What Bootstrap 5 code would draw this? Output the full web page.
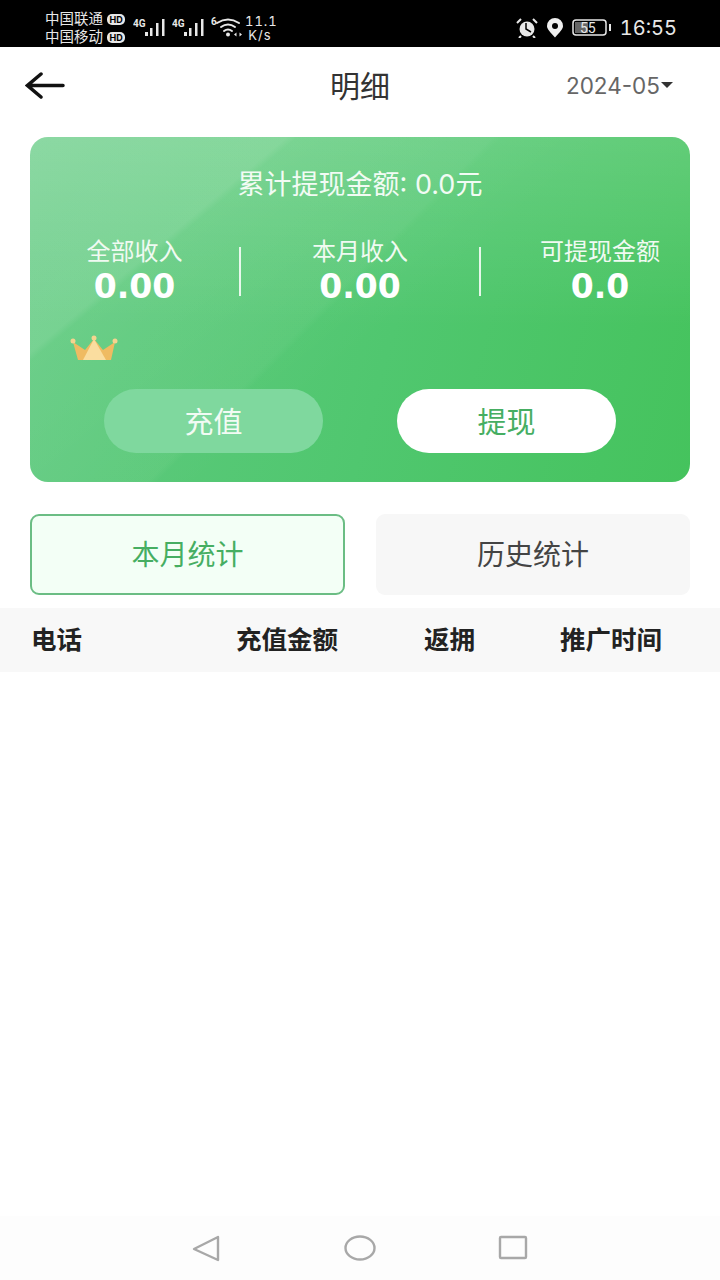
<!DOCTYPE html>
<html lang="zh-CN">

<head>
    <meta charset="UTF-8">
    <meta name="viewport" content="width=device-width, initial-scale=1.0">
    <title>明细</title>
    <link rel="stylesheet" href="https://cdn.jsdelivr.net/npm/bootstrap@5.3.0/dist/css/bootstrap.min.css">
    <style>
        body {
            background-color: #fff;
            font-family: Inter, "Noto Sans CJK SC", sans-serif;
            color: #222;
        }

        .phone {
            width: 720px;
            height: 1280px;
            overflow: hidden;
        }

        /* status bar */
        .status-bar {
            height: 47px;
            background-color: #000;
            color: #e8e8e8;
            padding: 9px 43px 0 45px;
        }

        .carriers {
            font-size: 14.500px;
            line-height: 18px;
            width: 85px;
            white-space: nowrap;
        }

        .hd-tag {
            display: inline-block;
            width: 18px;
            height: 11px;
            border-radius: 5px;
            background: #e8e8e8;
            color: #000;
            font-size: 9px;
            line-height: 11px;
            font-weight: 700;
            text-align: center;
            vertical-align: 1px;
        }

        .sig-icon {
            margin-left: 3px;
        }

        .net-speed {
            font-size: 13px;
            line-height: 14px;
            letter-spacing: 1px;
            font-feature-settings: "tnum";
            width: 30px;
            margin-left: 2px;
            margin-top: -1px;
            white-space: nowrap;
        }

        .clock {
            font-size: 20px;
            font-feature-settings: "tnum";
        }

        /* title row */
        .title-row {
            height: 78px;
            padding: 0 25px;
        }

        .title-side {
            flex: 1 1 0;
        }

        .title-text {
            font-size: 30px;
            color: #333;
            line-height: 1;
        }

        .month-pick {
            font-size: 22.500px;
            color: #666;
            margin-right: 22px;
        }

        .caret-down {
            width: 0;
            height: 0;
            border-left: 6px solid transparent;
            border-right: 6px solid transparent;
            border-top: 6px solid #333;
            margin: 0 0 3px 1px;
        }

        /* green card */
        .money-panel {
            height: 345px;
            margin: 12px 30px 0;
            border-radius: 18px;
            color: #fff;
            background:
                linear-gradient(180deg, rgba(255, 255, 255, .14) 0, rgba(255, 255, 255, 0) 55%),
                linear-gradient(140deg, rgba(255, 255, 255, .12) 0, rgba(255, 255, 255, .13) 24%, rgba(255, 255, 255, .05) 25%, rgba(255, 255, 255, 0) 55%),
                linear-gradient(135deg, rgba(255, 255, 255, .04) 0, rgba(255, 255, 255, .04) 46%, rgba(255, 255, 255, 0) 47%),
                linear-gradient(105deg, #60ca80 0%, #50c76f 55%, #45c35d 100%);
        }

        .panel-total {
            font-size: 27px;
            line-height: 36px;
            padding-top: 30px;
            box-sizing: content-box;
            color: #f2fbf4;
        }

        .stat-row {
            margin-top: 33px;
            height: 70px;
        }

        .stat-first {
            width: 209px;
        }

        .stat-mid {
            width: 238px;
        }

        .stat-last {
            width: 209px;
            padding-left: 29px;
        }

        .stat-label {
            font-size: 24px;
            line-height: 32px;
            color: #f0faf2;
        }

        .stat-value {
            font-family: "DejaVu Sans", sans-serif;
            font-size: 33px;
            font-weight: 700;
            line-height: 38px;
        }

        .stat-line {
            width: 2px;
            height: 49px;
            margin-top: 1px;
            background: rgba(255, 255, 255, .85);
        }

        .crown-wrap {
            padding: 29px 0 0 40px;
            height: 55px;
            line-height: 0;
        }

        .panel-btns {
            margin-top: 28px;
            padding: 0 74px;
        }

        .pill-btn {
            width: 219px;
            height: 64px;
            border-radius: 32px;
            font-size: 29px;
            line-height: 67px;
            text-align: center;
        }

        .pill-light {
            background: #7fd89e;
            color: #f2fbf4;
        }

        .pill-white {
            background: #fff;
            color: #46ae62;
        }

        /* tabs */
        .tab-row {
            padding: 32px 30px 0;
        }

        .tab-box {
            height: 81px;
            border-radius: 9px;
            font-size: 28px;
        }

        .tab-on {
            width: 315px;
            background: #f3fff6;
            border: 2px solid #6bbd84;
            color: #46ae62;
        }

        .tab-off {
            width: 314px;
            background: #f7f7f7;
            color: #444;
        }

        /* table head */
        .table-head {
            margin-top: 13px;
            height: 64px;
            background: #f8f8f8;
            font-size: 25.500px;
            font-weight: 700;
            line-height: 64px;
            color: #222;
        }

        .col-phone {
            width: 236px;
            padding-left: 31px;
        }

        .col-amount {
            width: 188px;
        }

        .col-rebate {
            width: 136px;
        }

        /* nav bar */
        .nav-keys {
            height: 64px;
            background: #fdfdfd;
            padding: 0 192px;
        }

        .nav-keys svg {
            display: block;
        }

        .list-area {
            height: 544px;
        }
    </style>
</head>

<body>
    <div class="phone d-flex flex-column">
        <div class="status-bar d-flex align-items-center">
            <div class="carriers">
                <div>中国联通 <span class="hd-tag">HD</span></div>
                <div>中国移动 <span class="hd-tag">HD</span></div>
            </div>
            <!-- signal 1 -->
            <svg width="36" height="30" viewBox="0 0 36 30" class="sig-icon">
                <text x="0" y="14" font-size="10" font-weight="700" fill="#e8e8e8" font-family="Roboto">4G</text>
                <g fill="#e8e8e8">
                    <rect x="12" y="19" width="3" height="4" />
                    <rect x="17" y="15" width="2.500" height="8" />
                    <rect x="23" y="10" width="2.500" height="13" />
                    <rect x="29" y="6" width="2.500" height="17" />
                </g>
            </svg>
            <!-- signal 2 -->
            <svg width="36" height="30" viewBox="0 0 36 30" class="sig-icon">
                <text x="0" y="14" font-size="10" font-weight="700" fill="#e8e8e8" font-family="Roboto">4G</text>
                <g fill="#e8e8e8">
                    <rect x="12" y="19" width="3" height="4" />
                    <rect x="17" y="15" width="2.500" height="8" />
                    <rect x="23" y="10" width="2.500" height="13" />
                    <rect x="29" y="6" width="2.500" height="17" />
                </g>
            </svg>
            <!-- wifi -->
            <svg width="32" height="30" viewBox="0 0 32 30" class="sig-icon">
                <text x="0" y="12" font-size="10" font-weight="700" fill="#e8e8e8" font-family="Roboto">6</text>
                <g fill="none" stroke="#e8e8e8" stroke-width="2" stroke-linecap="round">
                    <path d="M6 10Q17 3 28 10" />
                    <path d="M10 14Q17 9 24 14" />
                    <path d="M13 18Q17 15 21 18" />
                </g>
                <circle cx="17" cy="21.500" r="2" fill="#e8e8e8" />
                <path d="M23 21.500l2.500-2v4zM31 21.500l-2.500-2v4z" fill="#e8e8e8" />
            </svg>
            <div class="net-speed text-center">11.1<br>K/s</div>
            <div class="d-flex align-items-center gap-2 ms-auto">
                <!-- alarm -->
                <svg width="22" height="20" viewBox="0 0 22 20">
                    <circle cx="11" cy="11" r="7.500" fill="#e8e8e8" />
                    <path d="M10 5v6l5 3" fill="none" stroke="#000" stroke-width="1.500" />
                    <path d="M1 5l4-4M21 5l-4-4M5 18l-2 2M17 18l2 2" stroke="#e8e8e8" stroke-width="2" />
                </svg>
                <!-- location -->
                <svg width="18" height="20" viewBox="0 0 18 20">
                    <path d="M9 19.500C4 14 1 11 1 8a8 8 0 0 1 16 0c0 3-3 6-8 11.500z" fill="#efefef" />
                    <circle cx="9" cy="8" r="3" fill="#000" />
                </svg>
                <!-- battery -->
                <svg width="40" height="18" viewBox="0 0 40 18">
                    <rect x="1" y="1" width="33" height="15" rx="3" fill="none" stroke="#e8e8e8" stroke-width="1.500" />
                    <rect x="3" y="3" width="13" height="11" fill="#666" />
                    <text x="8" y="13.500" font-size="14" fill="#e8e8e8" font-family="Roboto">55</text>
                    <rect x="37" y="5" width="2" height="7" fill="#e8e8e8" />
                </svg>
                <span class="clock">16:55</span>
            </div>
        </div>

        <div class="title-row d-flex align-items-center">
            <div class="title-side">
                <svg width="40" height="30" viewBox="0 0 40 30" class="d-block">
                    <path d="M38 14.500H3M16 3L2.500 14.500L16 26" fill="none" stroke="#111" stroke-width="3.500" stroke-linecap="round" />
                </svg>
            </div>
            <span class="title-text">明细</span>
            <div class="title-side d-flex justify-content-end">
                <span class="month-pick d-flex align-items-center">2024-05<i class="caret-down"></i></span>
            </div>
        </div>

        <div class="money-panel">
            <div class="panel-total text-center">累计提现金额: 0.0元</div>
            <div class="stat-row d-flex align-items-center">
                <div class="stat-first text-center">
                    <div class="stat-label">全部收入</div>
                    <div class="stat-value">0.00</div>
                </div>
                <div class="stat-line"></div>
                <div class="stat-mid text-center">
                    <div class="stat-label">本月收入</div>
                    <div class="stat-value">0.00</div>
                </div>
                <div class="stat-line"></div>
                <div class="stat-last text-center">
                    <div class="stat-label">可提现金额</div>
                    <div class="stat-value">0.0</div>
                </div>
            </div>
            <div class="crown-wrap">
                <svg width="48" height="26" viewBox="0 0 48 26">
                    <path d="M3 7L8 25H41L45 7L33 15L24 4L15 15z" fill="#efbb62" />
                    <path d="M24 4L13 25H36z" fill="#fadd9f" />
                    <circle cx="3" cy="6" r="2.500" fill="#f5d48f" />
                    <circle cx="24" cy="3" r="2.500" fill="#f5d48f" />
                    <circle cx="45" cy="6" r="2.500" fill="#f5d48f" />
                </svg>
            </div>
            <div class="panel-btns d-flex justify-content-between">
                <div class="pill-btn pill-light">充值</div>
                <div class="pill-btn pill-white">提现</div>
            </div>
        </div>

        <div class="tab-row d-flex justify-content-between">
            <div class="tab-box tab-on d-flex align-items-center justify-content-center">本月统计</div>
            <div class="tab-box tab-off d-flex align-items-center justify-content-center">历史统计</div>
        </div>

        <div class="table-head d-flex">
            <div class="col-phone">电话</div>
            <div class="col-amount">充值金额</div>
            <div class="col-rebate">返拥</div>
            <div>推广时间</div>
        </div>

        <div class="list-area"></div>

        <div class="nav-keys d-flex align-items-center justify-content-between">
            <svg width="30" height="30" viewBox="0 0 30 30">
                <path d="M26 4L2 16l24 11z" fill="none" stroke="#a8a8a8" stroke-width="2.400" stroke-linejoin="round" />
            </svg>
            <svg width="32" height="26" viewBox="0 0 32 26">
                <ellipse cx="16" cy="13" rx="14.500" ry="11.500" fill="none" stroke="#a8a8a8" stroke-width="2.400" />
            </svg>
            <svg width="30" height="26" viewBox="0 0 30 26">
                <rect x="2" y="2" width="26" height="21" rx="1" fill="none" stroke="#a8a8a8" stroke-width="2.400" />
            </svg>
        </div>
    </div>
</body>

</html>
